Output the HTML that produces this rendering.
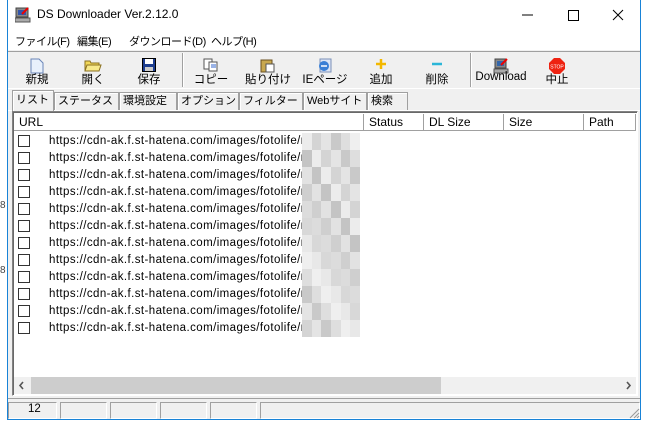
<!DOCTYPE html>
<html><head><meta charset="utf-8"><style>
*{margin:0;padding:0;box-sizing:border-box}
body{width:649px;height:427px;background:#fff;font-family:"Liberation Sans","Noto Sans CJK JP",sans-serif;font-size:11px;color:#000;position:relative;overflow:hidden}
.a{position:absolute;white-space:nowrap}
.win{position:absolute;left:7px;top:0;width:634px;height:420px;border:1px solid #1883d7;border-top:none;background:#f0f0f0}
.tb{position:absolute;left:8px;top:51px;width:632px;height:38px;background:#f0f0f0;border-top:1px solid #a0a0a0;border-bottom:1px solid #fff}
.btn{position:absolute;top:58px;text-align:center;width:56px}
.btn .l{position:absolute;top:13px;width:100%;left:0;font-size:11.5px}
.tab{position:absolute;top:92px;height:18px;border:1px solid #a0a0a0;border-bottom:none;background:#f0f0f0;padding:0 3px;line-height:16px;font-size:11px;box-shadow:inset 1px 1px #fff;white-space:nowrap;overflow:hidden}
.hd{position:absolute;top:114px;height:17px;border-right:1px solid #a0a0a0;border-bottom:1px solid #a0a0a0;background:#fff;line-height:16px;padding-left:5px;font-size:12px}
.row{position:absolute;left:18px;height:17px}
.cb{position:absolute;left:0;top:2px;width:12px;height:12px;border:1px solid #333;background:#fff}
.url{position:absolute;left:31px;top:0;line-height:17px;font-size:11.5px;letter-spacing:0.42px}
.pix{position:absolute;left:284px;top:0;width:58px;height:17px;display:flex}
.pix i{flex:1;height:17px}
.sp{position:absolute;top:402px;height:17px;border:1px solid #a0a0a0;border-right-color:#fff;border-bottom-color:#fff}
</style></head><body>
<div class="a" style="left:0;top:200px;font-size:10px;color:#444">8</div>
<div class="a" style="left:0;top:265px;font-size:10px;color:#444">8</div>
<div class="win"></div>
<div class="a" style="left:8px;top:0;width:632px;height:50px;background:#fff"></div>
<svg class="a" style="left:15px;top:7px" width="16" height="16"><rect x="1" y="1" width="12" height="9" fill="#888" stroke="#444"/><rect x="3" y="3" width="8" height="5" fill="#3355aa"/><rect x="0" y="11" width="15" height="4" fill="#aaa" stroke="#555"/><path d="M7 7 L13 1" stroke="#e00" stroke-width="2"/></svg>
<div class="a" style="left:37px;top:7px;font-size:12px">DS Downloader Ver.2.12.0</div>
<svg class="a" style="left:520px;top:8px" width="110" height="14"><line x1="2" y1="7" x2="13" y2="7" stroke="#000"/><rect x="48.5" y="2.5" width="10" height="10" fill="none" stroke="#000"/><path d="M93 2 L103 12 M103 2 L93 12" stroke="#000"/></svg>
<div class="a" style="left:15px;top:33px;letter-spacing:-0.5px">ファイル(F)</div>
<div class="a" style="left:77px;top:33px;letter-spacing:-0.5px">編集(E)</div>
<div class="a" style="left:129px;top:33px;letter-spacing:-0.5px">ダウンロード(D)</div>
<div class="a" style="left:211px;top:33px;letter-spacing:-0.5px">ヘルプ(H)</div>
<div class="tb"></div>
<div class="a" style="left:182px;top:53px;width:1px;height:34px;background:#a0a0a0;box-shadow:1px 0 #fff"></div>
<div class="a" style="left:470px;top:53px;width:1px;height:34px;background:#a0a0a0;box-shadow:1px 0 #fff"></div>
<div class="btn" style="left:9px"><svg width="14" height="16"><path d="M1 1 H9 L13 5 V15 H1 Z" fill="#e8f0fb" stroke="#6a86b8"/></svg><div class="l">新規</div></div>
<div class="btn" style="left:65px"><svg width="18" height="14"><path d="M1 3 H6 L7 5 H15 V13 H1 Z" fill="#f2d858" stroke="#8a7020"/><path d="M3 7 H17 L15 13 H1 Z" fill="#f8e98a" stroke="#8a7020"/></svg><div class="l">開く</div></div>
<div class="btn" style="left:121px"><svg width="14" height="14"><rect x="0.5" y="0.5" width="13" height="13" fill="#1d3d8f" stroke="#000"/><rect x="3" y="1" width="8" height="5" fill="#fff"/><rect x="3" y="9" width="8" height="4" fill="#ccc"/></svg><div class="l">保存</div></div>
<div class="btn" style="left:183px"><svg width="16" height="14"><rect x="1" y="1" width="8" height="10" fill="#fff" stroke="#555"/><rect x="6" y="4" width="8" height="9" fill="#fff" stroke="#555"/><path d="M8 7h5M8 9h5" stroke="#36c"/></svg><div class="l">コピー</div></div>
<div class="btn" style="left:240px"><svg width="16" height="15"><rect x="1" y="2" width="11" height="12" fill="#c8a850" stroke="#6a5020"/><rect x="6" y="6" width="8" height="8" fill="#fff" stroke="#555"/></svg><div class="l">貼り付け</div></div>
<div class="btn" style="left:297px"><svg width="16" height="15"><rect x="3" y="1" width="11" height="13" fill="#dde6f5" stroke="#7a8fb8"/><circle cx="7" cy="8" r="5" fill="#3a7fd5"/><path d="M4 8h6" stroke="#fff" stroke-width="1.5"/></svg><div class="l">IEページ</div></div>
<div class="btn" style="left:353px"><svg width="12" height="12"><path d="M6 1v10M1 6h10" stroke="#f3b800" stroke-width="2.5"/></svg><div class="l">追加</div></div>
<div class="btn" style="left:409px"><svg width="12" height="12"><path d="M1 6h10" stroke="#2bb6d8" stroke-width="2.5"/></svg><div class="l">削除</div></div>
<div class="btn" style="left:473px"><svg width="16" height="16"><rect x="2" y="1" width="11" height="9" fill="#888" stroke="#444"/><rect x="4" y="3" width="7" height="5" fill="#36a"/><rect x="1" y="11" width="14" height="4" fill="#aaa" stroke="#555"/><path d="M8 7 L14 1" stroke="#e00" stroke-width="2"/></svg><div class="l">Download</div></div>
<div class="btn" style="left:529px"><svg width="16" height="16"><path d="M5 0H11L16 5V11L11 16H5L0 11V5Z" fill="#e21"/><text x="8" y="10.5" font-size="5" fill="#fff" text-anchor="middle" font-family="Liberation Sans">STOP</text></svg><div class="l">中止</div></div>
<div class="a" style="left:8px;top:110px;width:632px;height:1px;background:#fff"></div>
<div class="tab" style="left:54px;width:65px">ステータス</div>
<div class="tab" style="left:119px;width:58px">環境設定</div>
<div class="tab" style="left:177px;width:62px">オプション</div>
<div class="tab" style="left:239px;width:64px">フィルター</div>
<div class="tab" style="left:303px;width:64px">Webサイト</div>
<div class="tab" style="left:367px;width:41px">検索</div>
<div class="a" style="left:12px;top:111px;width:626px;height:285px;background:#fff;border:1px solid #828282;border-right-color:#fff;border-bottom-color:#fff;box-shadow:inset 1px 1px #696969"></div>
<div class="tab" style="left:12px;width:42px;top:90px;height:21px;padding-left:3px;line-height:19px;z-index:2">リスト</div>
<div class="hd" style="left:14px;width:350px">URL</div>
<div class="hd" style="left:364px;width:60px">Status</div>
<div class="hd" style="left:424px;width:80px">DL Size</div>
<div class="hd" style="left:504px;width:80px">Size</div>
<div class="hd" style="left:584px;width:52px">Path</div>
<div id="rows"></div>
<div class="a" style="left:14px;top:377px;width:622px;height:17px;background:#f0f0f0"></div>
<div class="a" style="left:31px;top:377px;width:410px;height:17px;background:#cdcdcd"></div>
<svg class="a" style="left:18px;top:381px" width="8" height="9"><path d="M5 1L2 4.5L5 8" stroke="#555" stroke-width="1.6" fill="none"/></svg>
<svg class="a" style="left:624px;top:381px" width="8" height="9"><path d="M3 1L6 4.5L3 8" stroke="#555" stroke-width="1.6" fill="none"/></svg>
<div class="a" style="left:8px;top:398px;width:632px;height:1px;background:#a0a0a0"></div>
<div class="sp" style="left:8px;width:49px"></div>
<div class="a" style="left:28px;top:403px;font-size:11.5px">12</div>
<div class="sp" style="left:60px;width:47px"></div>
<div class="sp" style="left:110px;width:47px"></div>
<div class="sp" style="left:160px;width:47px"></div>
<div class="sp" style="left:210px;width:47px"></div>
<div class="sp" style="left:260px;width:380px"></div>
<svg class="a" style="left:628px;top:407px" width="12" height="12"><path d="M11 2L2 11M11 6L6 11M11 9L9 11" stroke="#999"/></svg>
<script>
var g=['#ececec','#d8d8d8','#e4e4e4','#cfcfcf','#dedede','#c4c4c4','#e8e8e8','#d4d4d4','#dcdcdc','#c9c9c9','#e2e2e2','#efefef'];
var h='';for(var i=0;i<12;i++){var y=133+i*17;var p='';for(var j=0;j<6;j++){p+='<i style="background:'+g[(i*5+j*7)%12]+'"></i>';}
h+='<div class="row" style="top:'+y+'px;width:350px"><div class="cb"></div><div class="url">https://cdn-ak.f.st-hatena.com/images/fotolife/r</div><div class="pix">'+p+'</div></div>';}
document.getElementById('rows').innerHTML=h;
</script>
</body></html>
